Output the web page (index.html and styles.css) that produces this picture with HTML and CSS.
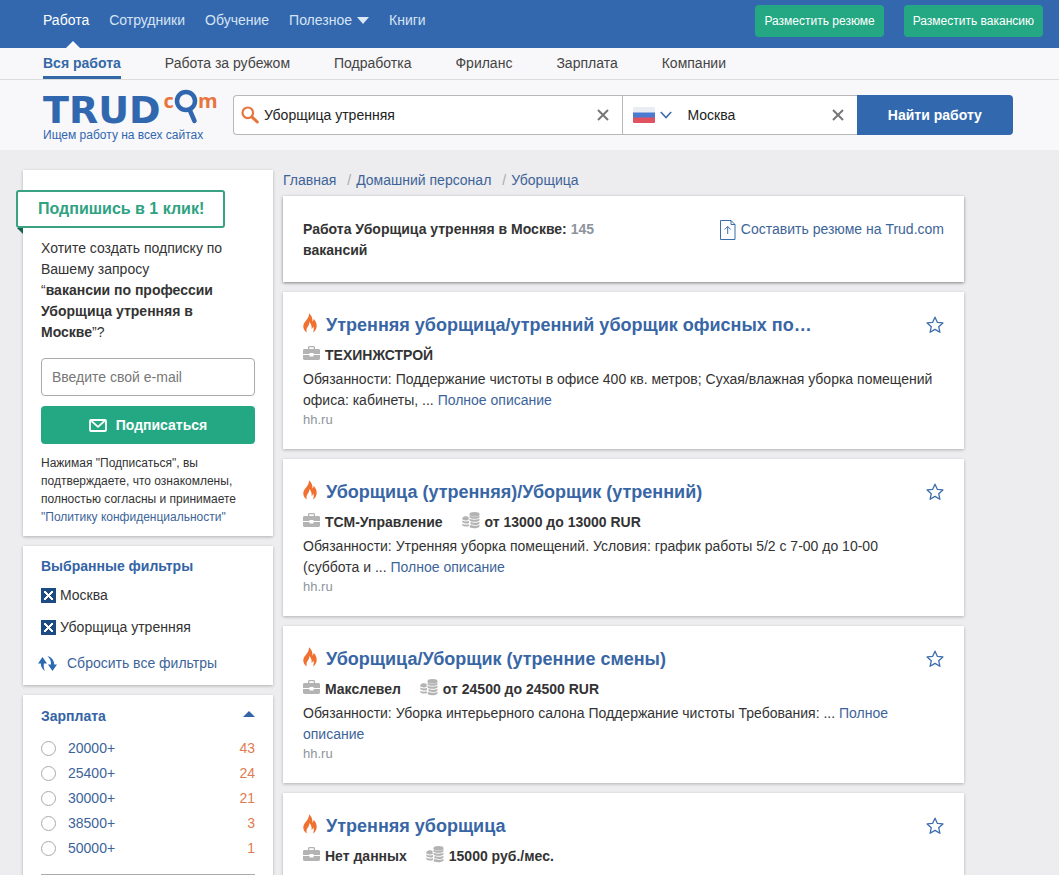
FILE: index.html
```html
<!DOCTYPE html>
<html lang="ru">
<head>
<meta charset="utf-8">
<title>Работа Уборщица утренняя в Москве</title>
<link rel="stylesheet" href="styles.css">
</head>
<body>
<svg class="sprite" aria-hidden="true">
  <symbol id="flame" viewBox="0 0 14 20"><path fill="#f07030" d="M3.800 19.500C1.500 17.800.2 15.800.3 13.200.4 10.800 1.800 9.200 3.100 7.500 4.700 5.300 6.200 3.400 6 .2c2.500 2.300 3.800 5 3.400 8.200.9-.7 1.300-1.600 1.300-2.700 2 2.300 3.200 4.800 3 7.600-.2 2.900-1.700 5.200-3.600 6.300.8-2.400.9-4.200.2-6-.4 1.200-.9 1.900-1.700 2.300.3-2.700-.3-5-2.200-7-.1 2.400-1 3.800-1.900 5.200-1 1.600-1.300 3.400-.7 5.400z"/></symbol>
  <symbol id="case" viewBox="0 0 17 14"><path fill="#b3b3b3" d="M5 3V1.500C5 .7 5.600 0 6.500 0h4c.9 0 1.500.7 1.500 1.500V3h3.500c.8 0 1.500.6 1.500 1.400V8h-6.500V7h-4v1H0V4.400C0 3.600.7 3 1.500 3zm1.300 0h4.400V1.300H6.300zM0 9h6.500v1.500h4V9H17v3.600c0 .8-.7 1.400-1.500 1.400h-14C.7 14 0 13.400 0 12.600z"/></symbol>
  <symbol id="coins" viewBox="0 0 18 17"><g fill="#b3b3b3"><ellipse cx="12.500" cy="2.300" rx="5" ry="2.200"/><path d="M7.500 3.600c1.500 1.600 8.500 1.600 10 0v1.700c-1 2-9 2-10 0zM7.500 6.600c1.500 1.600 8.500 1.600 10 0v1.700c-1 2-9 2-10 0zM8.500 9.700c2 1.400 7.500 1.300 9 0v1.700c-1 1.800-7 2-9 .6zM8.500 12.800c2 1.400 7.500 1.300 9 0v1.700c-1 2.200-9 2.200-10 .6z"/><path d="M.3 6.200C1 4.200 5 3.800 6.600 5v3C4.500 8.800 1 8.500.3 7zM.3 8.300C1.500 9.600 5 9.800 7 9v1.900c-2 .9-6 .6-6.700-.8zM.3 11.500c1.200 1.300 4.700 1.500 6.700.7v1.900c-2 .9-6 .6-6.700-.8z"/></g></symbol>
  <symbol id="star" viewBox="0 0 18 18"><path fill="none" stroke="#3d6dab" stroke-width="1.300" stroke-linejoin="round" d="M9 1.200 11.300 6.300 16.900 6.900 12.700 10.700 13.900 16.300 9 13.400 4.100 16.300 5.300 10.700 1.100 6.900 6.700 6.300z"/></symbol>
  <symbol id="cross" viewBox="0 0 12 12"><path fill="none" stroke="#777" stroke-width="2" d="M1 1 11 11M11 1 1 11"/></symbol>
</svg>

<header>
  <div class="topbar">
    <nav class="topnav">
      <a class="current" href="#">Работа</a>
      <a href="#">Сотрудники</a>
      <a href="#">Обучение</a>
      <a class="more" href="#">Полезное<svg width="12" height="7" viewBox="0 0 12 7"><path fill="#dce8f6" d="M0 0h12L6 7z"/></svg></a>
      <a href="#">Книги</a>
    </nav>
    <div class="top-actions">
      <button type="button" class="btn-top">Разместить резюме</button>
      <button type="button" class="btn-top">Разместить вакансию</button>
    </div>
  </div>
  <nav class="subnav">
    <a class="current" href="#">Вся работа</a>
    <a href="#">Работа за рубежом</a>
    <a href="#">Подработка</a>
    <a href="#">Фриланс</a>
    <a href="#">Зарплата</a>
    <a href="#">Компании</a>
  </nav>
  <div class="searchbar">
    <a class="brand" href="#">
      <span class="brand-name"><span class="brand-trud">TRUD</span><span class="brand-com">c<svg width="24" height="35" viewBox="0 0 24 35"><circle cx="12" cy="12" r="9" fill="none" stroke="#3067ae" stroke-width="4.500"/><path d="M15.500 20.500 20.500 32" stroke="#3067ae" stroke-width="4.500" stroke-linecap="round"/></svg>m</span></span>
      <span class="tagline">Ищем работу на всех сайтах</span>
    </a>
    <form class="search">
      <div class="field field-query">
        <svg width="18" height="18" viewBox="0 0 18 18"><circle cx="6.800" cy="6.800" r="5.300" fill="none" stroke="#e8743b" stroke-width="2.200"/><path d="M10.800 10.800 16.300 16" stroke="#e8743b" stroke-width="3" stroke-linecap="round"/></svg>
        <input type="text" aria-label="Профессия" value="Уборщица утренняя">
        <button type="reset" class="clear" aria-label="Очистить профессию"><svg width="12" height="12"><use href="#cross"/></svg></button>
      </div>
      <div class="field field-place">
        <button type="button" class="country" aria-label="Страна">
          <svg width="22" height="16" viewBox="0 0 22 16"><rect width="22" height="16" rx="1" fill="#e9edf3"/><path fill="#4a7bd0" d="M0 5.500h22V11H0z"/><path fill="#e0525f" d="M0 10.500h22V15a1 1 0 0 1-1 1H1a1 1 0 0 1-1-1z"/></svg>
          <svg width="12" height="8" viewBox="0 0 12 8"><path fill="none" stroke="#3d6dab" stroke-width="1.600" d="M.8 1 6 6.500 11.200 1"/></svg>
        </button>
        <input type="text" aria-label="Город" value="Москва">
        <button type="reset" class="clear" aria-label="Очистить город"><svg width="12" height="12"><use href="#cross"/></svg></button>
      </div>
      <button type="submit" class="btn-search">Найти работу</button>
    </form>
  </div>
</header>

<div class="page">
  <aside class="side">
    <form class="card subscribe">
      <h2 class="ribbon">Подпишись в 1 клик!</h2>
      <p class="offer">Хотите создать подписку по Вашему запросу<br>“<b>вакансии по профессии Уборщица утренняя в Москве</b>”?</p>
      <input class="email" type="email" aria-label="E-mail" placeholder="Введите свой e-mail">
      <button type="submit" class="btn-subscribe"><svg width="18" height="13" viewBox="0 0 18 13"><rect x="1" y="1" width="16" height="11" rx="1" fill="none" stroke="#fff" stroke-width="1.800"/><path d="M2.500 2 9 7.800 15.500 2" fill="none" stroke="#fff" stroke-width="1.800"/></svg>Подписаться</button>
      <p class="terms">Нажимая "Подписаться", вы подтверждаете, что ознакомлены, полностью согласны и принимаете <a href="#">"Политику конфиденциальности"</a></p>
    </form>

    <section class="card filters">
      <h3>Выбранные фильтры</h3>
      <label class="picked"><input type="checkbox" checked>Москва</label>
      <label class="picked"><input type="checkbox" checked>Уборщица утренняя</label>
      <a class="reset" href="#"><svg width="19" height="16" viewBox="0 0 19 16"><path fill="#2a6ab0" d="M4.500 1 0 7.500h2.800c.1 3 1.400 5.800 4.200 7.500-1.300-2.500-1.500-5-1.100-7.500H9zM14.500 15 19 8.500h-2.800C16.100 5.500 14.800 2.700 12 1c-.8-.5-1.600-.8-2.500-.8 2.700 2.300 3.700 5 3.600 8.300H10z"/></svg>Сбросить все фильтры</a>
    </section>

    <section class="card salary">
      <h3>Зарплата<svg width="12" height="6" viewBox="0 0 12 6"><path fill="#3464a5" d="M0 6 6 0l6 6z"/></svg></h3>
      <label class="range"><input type="radio" name="salary"><span>20000+</span><span class="count">43</span></label>
      <label class="range"><input type="radio" name="salary"><span>25400+</span><span class="count">24</span></label>
      <label class="range"><input type="radio" name="salary"><span>30000+</span><span class="count">21</span></label>
      <label class="range"><input type="radio" name="salary"><span>38500+</span><span class="count">3</span></label>
      <label class="range"><input type="radio" name="salary"><span>50000+</span><span class="count">1</span></label>
      <hr>
    </section>
  </aside>

  <main class="results">
    <nav class="crumbs"><a href="#">Главная</a><a href="#">Домашний персонал</a><a href="#">Уборщица</a></nav>
    <section class="card summary">
      <h1>Работа Уборщица утренняя в Москве: <span class="total">145</span> вакансий</h1>
      <a class="make-cv" href="#"><svg width="16" height="20" viewBox="0 0 16 20"><path fill="none" stroke="#3d6dab" d="M.5.5h10.500l4 4v15H.5zM11 .5v4h4M7.700 14V6.500M4.700 9.500l3-3 3 3"/></svg>Составить резюме на Trud.com</a>
    </section>

    <article class="card job">
      <div class="job-head"><svg class="hot" width="14" height="20"><use href="#flame"/></svg><h2><a href="#">Утренняя уборщица/утренний уборщик офисных по…</a></h2><button type="button" class="fav" aria-label="В избранное"><svg width="18" height="18"><use href="#star"/></svg></button></div>
      <div class="meta"><span class="fact"><svg width="17" height="14"><use href="#case"/></svg>ТЕХИНЖСТРОЙ</span></div>
      <p class="text">Обязанности: Поддержание чистоты в офисе 400 кв. метров; Сухая/влажная уборка помещений офиса: кабинеты, ... <a href="#">Полное описание</a></p>
      <div class="source">hh.ru</div>
    </article>

    <article class="card job">
      <div class="job-head"><svg class="hot" width="14" height="20"><use href="#flame"/></svg><h2><a href="#">Уборщица (утренняя)/Уборщик (утренний)</a></h2><button type="button" class="fav" aria-label="В избранное"><svg width="18" height="18"><use href="#star"/></svg></button></div>
      <div class="meta"><span class="fact"><svg width="17" height="14"><use href="#case"/></svg>ТСМ-Управление</span><span class="fact"><svg width="18" height="17"><use href="#coins"/></svg>от 13000 до 13000 RUR</span></div>
      <p class="text">Обязанности: Утренняя уборка помещений. Условия: график работы 5/2 с 7-00 до 10-00 (суббота и ... <a href="#">Полное описание</a></p>
      <div class="source">hh.ru</div>
    </article>

    <article class="card job">
      <div class="job-head"><svg class="hot" width="14" height="20"><use href="#flame"/></svg><h2><a href="#">Уборщица/Уборщик (утренние смены)</a></h2><button type="button" class="fav" aria-label="В избранное"><svg width="18" height="18"><use href="#star"/></svg></button></div>
      <div class="meta"><span class="fact"><svg width="17" height="14"><use href="#case"/></svg>Макслевел</span><span class="fact"><svg width="18" height="17"><use href="#coins"/></svg>от 24500 до 24500 RUR</span></div>
      <p class="text">Обязанности: Уборка интерьерного салона Поддержание чистоты Требования: ... <a href="#">Полное описание</a></p>
      <div class="source">hh.ru</div>
    </article>

    <article class="card job">
      <div class="job-head"><svg class="hot" width="14" height="20"><use href="#flame"/></svg><h2><a href="#">Утренняя уборщица</a></h2><button type="button" class="fav" aria-label="В избранное"><svg width="18" height="18"><use href="#star"/></svg></button></div>
      <div class="meta"><span class="fact"><svg width="17" height="14"><use href="#case"/></svg>Нет данных</span><span class="fact"><svg width="18" height="17"><use href="#coins"/></svg>15000 руб./мес.</span></div>
    </article>
  </main>
</div>
</body>
</html>
```

FILE: styles.css
```css
* { box-sizing: border-box; }
html { overflow: hidden; }
body {
  margin: 0;
  background: #edecee;
  color: #333;
  font: 14px/21px "Liberation Sans", Arial, sans-serif;
}
h1, h2, h3, p { margin: 0; font-size: inherit; }
a { color: #3d6499; text-decoration: none; }
svg { display: block; flex: none; }
button, input { font: inherit; color: inherit; margin: 0; }
button { padding: 0; border: 0; background: none; cursor: pointer; }
.sprite { position: absolute; width: 0; height: 0; }

.topbar {
  display: flex;
  justify-content: space-between;
  height: 48px;
  padding: 0 16px 0 43px;
  background: #3468ae;
}
.topnav { display: flex; gap: 20px; }
.topnav a { display: flex; align-items: center; gap: 5px; height: 40px; color: #d5e4f5; }
.topnav .current { position: relative; height: 48px; padding-bottom: 8px; color: #fff; }
.topnav .current::after {
  content: "";
  position: absolute;
  bottom: 0;
  left: 23px;
  border: 7px solid transparent;
  border-top: 0;
  border-bottom-color: #f8f7f9;
}
.top-actions { display: flex; gap: 20px; padding-top: 5px; }
.btn-top {
  height: 32px;
  padding: 0 9px;
  border-radius: 4px;
  background: #24a883;
  color: #fff;
  font-size: 12px;
}

.subnav {
  display: flex;
  gap: 44px;
  height: 32px;
  padding-left: 43px;
  border-bottom: 1px solid #dcdbdd;
  background: #f8f7f9;
}
.subnav a { height: 31px; line-height: 30px; color: #444; }
.subnav .current { border-bottom: 3px solid #3468a6; color: #3468a6; font-weight: bold; }

.searchbar {
  display: flex;
  gap: 17px;
  height: 70px;
  padding: 9px 46px 0 43px;
  background: #f8f7f9;
}
.brand { flex: none; width: 173px; color: #3067ae; }
.brand-name { display: flex; height: 37px; align-items: flex-start; }
.brand-trud { font: bold 38px/42px "DejaVu Sans", sans-serif; }
.brand-com {
  display: flex;
  margin-left: 3px;
  color: #e8743b;
  font: bold 20px/24px "Open Sans", sans-serif;
}
.tagline { display: block; font-size: 12px; line-height: 18px; }
.search {
  display: grid;
  flex: 1;
  grid-template-columns: 389fr 234fr 156fr;
  height: 40px;
  margin-top: 6px;
}
.field {
  display: flex;
  align-items: center;
  min-width: 0;
  border: 1px solid #b8b8b8;
  border-right: 0;
  background: #fff;
  color: #222;
}
.field input { flex: 1; min-width: 0; height: 36px; padding: 0; border: 0; outline: 0; background: none; }
.field-query { gap: 5px; padding: 0 13px 0 7px; border-radius: 4px 0 0 4px; }
.field-place { gap: 15px; padding: 0 13px 0 10px; }
.country { display: flex; align-items: center; gap: 5px; }
.btn-search {
  border-radius: 0 4px 4px 0;
  background: #3168ae;
  color: #fff;
  font-weight: bold;
}

.page {
  display: grid;
  grid-template-columns: 250px minmax(0, 681px);
  gap: 10px;
  align-items: start;
  padding: 20px 23px;
}
.side { display: grid; gap: 10px; }
.card { background: #fff; box-shadow: 0 1px 3px rgba(0, 0, 0, .25); }

.subscribe { padding: 20px 18px 10px; }
.ribbon {
  position: relative;
  width: 209px;
  height: 38px;
  margin: 0 0 10px -25px;
  padding-left: 20px;
  border: 2px solid #38a283;
  border-radius: 3px;
  background: #fff;
  color: #2ea281;
  font-size: 16px;
  line-height: 33px;
}
.ribbon::after {
  content: "";
  position: absolute;
  top: 36px;
  left: -1px;
  border-top: 6px solid #14634e;
  border-left: 6px solid transparent;
}
.email {
  display: block;
  width: 100%;
  height: 38px;
  margin-top: 15px;
  padding: 0 10px;
  border: 1px solid #aaa;
  border-radius: 4px;
}
.email::placeholder { color: #777; }
.btn-subscribe {
  display: flex;
  align-items: center;
  justify-content: center;
  gap: 9px;
  width: 100%;
  height: 38px;
  margin: 10px 0;
  border-radius: 4px;
  background: #24a883;
  color: #fff;
  font-weight: bold;
}
.terms { font-size: 12px; line-height: 18px; }

.side h3 { color: #3464a5; }
.filters { padding: 10px 18px 11px; }
.picked { display: flex; align-items: center; gap: 4px; height: 32px; }
.filters h3 { margin-bottom: 2px; }
.picked input {
  appearance: none;
  width: 15px;
  height: 15px;
  background:
    linear-gradient(45deg, transparent 42%, #fff 42% 58%, transparent 58%) center / 9px 9px no-repeat,
    linear-gradient(-45deg, transparent 42%, #fff 42% 58%, transparent 58%) center / 9px 9px no-repeat,
    #1d4b83;
}
.reset { display: flex; align-items: center; gap: 10px; margin: 10px 0 0 -3px; }

.salary { padding: 11px 18px; }
.salary h3 { display: flex; align-items: center; justify-content: space-between; margin-bottom: 9px; }
.salary h3 svg { margin-bottom: 6px; }
.range { display: flex; align-items: center; height: 25px; color: #3d6499; }
.range input {
  appearance: none;
  width: 15px;
  height: 15px;
  margin-right: 12px;
  border: 1px solid #aaa;
  border-radius: 50%;
}
.count { margin-left: auto; color: #e07b52; }
.salary hr { margin: 13px 0 0; border: 0; border-top: 1px solid #aaa; }

.results { display: grid; gap: 10px; }
.crumbs { display: flex; height: 16px; }
.crumbs a + a::before { content: "/"; padding: 0 5px 0 11px; color: #aaa; }
.summary {
  display: flex;
  justify-content: space-between;
  align-items: flex-start;
  min-height: 86px;
  padding: 23px 20px 20px;
  box-shadow: 0 1px 3px rgba(0, 0, 0, .45);
}
.summary h1 { max-width: 320px; }
.total { color: #8d949c; }
.make-cv { display: flex; align-items: center; gap: 5px; }

.job { padding: 20px; }
.job-head { display: flex; align-items: center; gap: 9px; height: 26px; }
.hot { margin-bottom: 4px; }
.job-head h2 { flex: 1; min-width: 0; font-size: 18px; line-height: 26px; }
.job-head h2 a { color: #3866a5; }
.meta { display: flex; align-items: center; gap: 19px; height: 31px; padding-top: 3px; font-weight: bold; }
.fact { display: flex; align-items: center; gap: 5px; }
.fact svg { margin-bottom: 4px; }
.text { padding-right: 10px; }
.source { color: #8d949c; font-size: 13px; line-height: 18px; }
```
